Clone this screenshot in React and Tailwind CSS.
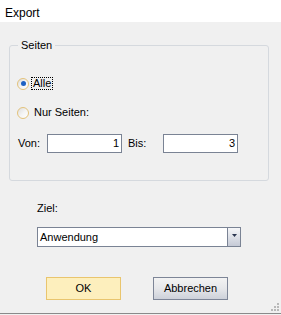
import React from "react";

function Radio({ checked }) {
  return (
    <div className="relative w-[12px] h-[12px] rounded-full border border-[#e3c27a] bg-gradient-to-br from-[#dcdcdc] via-[#f4f4f4] to-white flex items-center justify-center shrink-0">
      {checked && <div className="w-[5px] h-[5px] rounded-full bg-[#1f62c4]" />}
    </div>
  );
}

export default function App() {
  return (
    <div
      className="w-[281px] h-[315px] bg-[#f0f0f0] flex flex-col text-[11px] leading-[13px] text-black relative overflow-hidden"
      style={{ fontFamily: '"Liberation Sans", Arial, sans-serif' }}
    >
      <div className="h-[22px] bg-white pl-[5px] pt-[6px] text-[12px] leading-[14px]">Export</div>

      {/* group box */}
      <div className="relative ml-[9px] mt-[23px] w-[260px] h-[136px] border border-[#d5d9de] rounded-[3px] pl-[7px] pt-[31px]">
        <div className="absolute left-[8px] top-[-7px] bg-[#f0f0f0] px-[3px] leading-[13px]">Seiten</div>
        <div className="flex items-center h-[13px]">
          <Radio checked />
          <span className="ml-[2px] px-[1px] border border-dotted border-black leading-[11px] h-[13px] flex items-center">Alle</span>
        </div>
        <div className="flex items-center h-[13px] mt-[16px]">
          <Radio />
          <span className="ml-[5px]">Nur Seiten:</span>
        </div>
        <div className="flex items-center mt-[15px] ml-[1px]">
          <span className="w-[29px]">Von:</span>
          <div className="w-[75px] h-[19px] bg-white border border-[#7a8394] flex items-center justify-end pr-[2px]">1</div>
          <span className="ml-[6px] w-[35px]">Bis:</span>
          <div className="w-[75px] h-[19px] bg-white border border-[#7a8394] flex items-center justify-end pr-[2px]">3</div>
        </div>
      </div>

      <div className="ml-[37px] mt-[21px]">Ziel:</div>
      <div className="ml-[37px] mt-[12px] w-[204px] h-[20px] bg-white border border-[#7a8394] flex">
        <div className="flex-1 flex items-center pl-[2px]">Anwendung</div>
        <div className="w-[13px] h-full border-l border-[#7a8394] bg-gradient-to-b from-[#f6f7f9] to-[#c5cad6] flex justify-center pt-[6px]">
          <svg width="5" height="3" viewBox="0 0 5 3">
            <path d="M0 0H5L2.5 3Z" fill="#2a3550" />
          </svg>
        </div>
      </div>

      <div className="flex mt-[30px] ml-[46px] gap-[32px]">
        <div className="w-[75px] h-[23px] bg-[#fdefbd] border border-[#e9c56e] flex items-center justify-center">OK</div>
        <div className="w-[75px] h-[23px] bg-gradient-to-b from-[#f3f3f3] via-[#e6e7ea] to-[#cdd1da] border border-[#7d8597] flex items-center justify-center">Abbrechen</div>
      </div>

      {/* grip */}
      <svg className="absolute right-[2px] bottom-[4px]" width="8" height="8" viewBox="0 0 8 8">
        <rect x="6" y="0" width="2" height="2" fill="#b8b8b8" />
        <rect x="3" y="3" width="2" height="2" fill="#b8b8b8" />
        <rect x="6" y="3" width="2" height="2" fill="#b8b8b8" />
        <rect x="0" y="6" width="2" height="2" fill="#b8b8b8" />
        <rect x="3" y="6" width="2" height="2" fill="#b8b8b8" />
        <rect x="6" y="6" width="2" height="2" fill="#b8b8b8" />
      </svg>
      <div className="absolute left-0 bottom-[1px] w-full h-[1px] bg-[#8a8a8a]" />
    </div>
  );
}
